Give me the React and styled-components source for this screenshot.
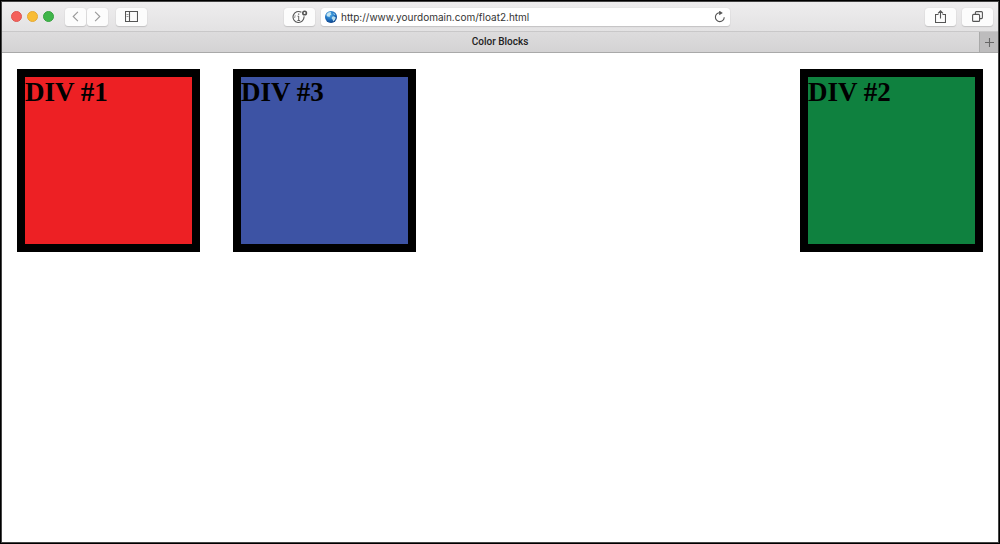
import React from 'react';
import styled, { createGlobalStyle } from 'styled-components';

const GlobalStyle = createGlobalStyle`
  * {
    box-sizing: border-box;
  }
  body {
    margin: 0;
    background: #fff;
  }
`;

const Window = styled.div`
  display: flex;
  flex-direction: column;
  min-height: 100vh;
  border: 1px solid #000;
  outline: 1px solid #444;
  outline-offset: -2px;
  padding: 1px;
  font-family: Roboto, 'Liberation Sans', sans-serif;
`;

const Toolbar = styled.header`
  display: grid;
  grid-template-columns: 273fr 446fr 263fr;
  align-items: center;
  height: 30px;
  padding: 0 5px 0 9px;
  background: linear-gradient(#eeedee, #e3e2e3);
  border-bottom: 1px solid #c9c8c9;
`;

const Group = styled.div`
  display: flex;
  align-items: center;
  gap: ${(props) => props.$gap || 0}px;
  justify-content: ${(props) => (props.$end ? 'flex-end' : 'flex-start')};
`;

const Lights = styled.div`
  display: flex;
  gap: 5px;
  margin-right: 11px;
`;

const Light = styled.button`
  width: 11px;
  height: 11px;
  padding: 0;
  border: 1px solid ${(props) => props.$edge};
  border-radius: 50%;
  background: ${(props) => props.$color};
`;

const ToolButton = styled.button`
  display: flex;
  align-items: center;
  justify-content: center;
  flex: none;
  width: ${(props) => (props.$narrow ? 21 : 31)}px;
  height: 18px;
  padding: 0;
  border: 0;
  border-radius: 3px;
  background: #fcfcfc;
  box-shadow: 0 0 1px #c4c3c4, 0 1px 1px #c4c3c4;
  color: ${(props) => (props.$dim ? '#999' : '#555')};
`;

const NavButtons = styled.div`
  display: flex;
  gap: 1px;
  margin-right: 8px;
`;

const AddressBar = styled.form`
  display: flex;
  align-items: center;
  flex: 1;
  min-width: 0;
  height: 18px;
  padding: 0 4px;
  gap: 4px;
  border-radius: 3px;
  background: #fff;
  box-shadow: 0 0 1px #c4c3c4, 0 1px 1px #c4c3c4;
`;

const AddressInput = styled.input`
  flex: 1;
  min-width: 0;
  padding: 0;
  border: 0;
  outline: 0;
  background: transparent;
  color: #333;
  font-family: Inter, 'Liberation Sans', sans-serif;
  font-size: 10px;
  line-height: 16px;
`;

const ReloadButton = styled.button`
  display: flex;
  padding: 0;
  border: 0;
  background: none;
  color: #555;
`;

const TabBar = styled.nav`
  display: flex;
  height: 21px;
  background: linear-gradient(#dddcdd, #d4d3d4);
  border-bottom: 1px solid #a9a9a9;
`;

const Tab = styled.button`
  flex: 1;
  padding: 0 0 0 19px;
  border: 0;
  background: none;
  color: #222;
  font-family: inherit;
  font-size: 10px;
  font-weight: 500;
  line-height: 20px;
`;

const NewTab = styled.button`
  display: flex;
  align-items: center;
  justify-content: center;
  width: 19px;
  padding: 0;
  border: 0;
  border-left: 1px solid #a9a9a9;
  background: #bdbcbd;
  color: #666;
`;

const Page = styled.main`
  display: flex;
  align-items: flex-start;
  gap: 33px;
  padding: 16px 15px;
`;

const Block = styled.section`
  flex: none;
  width: 183px;
  height: 183px;
  border: 8px solid #000;
  background: ${(props) => props.$color};
  margin-left: ${(props) => (props.$right ? 'auto' : 0)};
`;

const BlockTitle = styled.h1`
  margin: 0;
  color: #000;
  font-family: 'Liberation Serif', serif;
  font-size: 27px;
  font-weight: bold;
  line-height: 31px;
`;

const Icon = ({ width, height, children }) => (
  <svg
    width={width}
    height={height}
    viewBox={`0 0 ${width} ${height}`}
    fill="none"
    stroke="currentColor"
    strokeWidth="1.1"
    aria-hidden="true"
  >
    {children}
  </svg>
);

const Globe = () => (
  <svg width="12" height="12" viewBox="0 0 12 12" aria-hidden="true">
    <defs>
      <radialGradient id="sea" cx="0.4" cy="0.3" r="0.7">
        <stop offset="0" stopColor="#58b4ea" />
        <stop offset="0.6" stopColor="#1d6fc0" />
        <stop offset="1" stopColor="#0d4288" />
      </radialGradient>
    </defs>
    <circle cx="6" cy="6" r="6" fill="url(#sea)" />
    <path d="M1.5 3.2 3.4 1.4 6 1.1 5.6 2.5 6.4 3.4 4.9 4.6 4.6 6 3 5.4 1.8 5.2Z" fill="#c6e6f2" />
    <path d="M7 5.8 8.8 5.2 10.8 6.6 10 8.8 8.2 10.4 7.6 8.4 6.6 7.4Z" fill="#b5dcec" />
    <path d="M8 1.8 9.7 2.7 10.5 4.2 8.8 3.7Z" fill="#8fcbe8" />
  </svg>
);

const blocks = [
  { title: 'DIV #1', color: '#ed2024' },
  { title: 'DIV #3', color: '#3d53a4' },
  { title: 'DIV #2', color: '#0f813f', right: true },
];

export default function App() {
  return (
    <Window>
      <GlobalStyle />
      <Toolbar>
        <Group>
          <Lights>
            <Light $color="#f4605a" $edge="#df5650" aria-label="Close" />
            <Light $color="#f9bc33" $edge="#e5a935" aria-label="Minimize" />
            <Light $color="#3fb549" $edge="#36a23f" aria-label="Zoom" />
          </Lights>
          <NavButtons>
            <ToolButton $narrow $dim aria-label="Back">
              <Icon width={7} height={11}>
                <path d="M5.9 .8 1.2 5.5 5.9 10.2" />
              </Icon>
            </ToolButton>
            <ToolButton $narrow $dim aria-label="Forward">
              <Icon width={7} height={11}>
                <path d="M1.1 .8 5.8 5.5 1.1 10.2" />
              </Icon>
            </ToolButton>
          </NavButtons>
          <ToolButton aria-label="Show sidebar">
            <Icon width={13} height={11}>
              <path d="M.5 .5h12v10H.5ZM4.5 .5v10" />
              <path d="M1.5 3.5h2M1.5 5.5h2" strokeWidth="0.6" />
            </Icon>
          </ToolButton>
        </Group>
        <Group $gap={6}>
          <ToolButton aria-label="Content blockers">
            <Icon width={16} height={14}>
              <path d="M9.4 2.3A5.5 5.5 0 1 0 12 6.4" />
              <path d="M6.7 6v4.5M5.5 6.2h1.2M5.4 10.5h2.7" strokeWidth="0.9" />
              <path d="M6.7 3.6v1.2" />
              <path d="M3.2 5.2 2.6 8" strokeWidth="0.6" />
              <circle cx="12.6" cy="3" r="1.8" strokeWidth="1.6" />
            </Icon>
          </ToolButton>
          <AddressBar onSubmit={(e) => e.preventDefault()}>
            <Globe />
            <AddressInput
              aria-label="Address"
              defaultValue="http://www.yourdomain.com/float2.html"
            />
            <ReloadButton type="button" aria-label="Reload">
              <Icon width={12} height={12}>
                <path d="M6 1.8A4.4 4.4 0 1 0 10.2 6.2" />
                <path d="M5.2 -.4 8.8 1.9 5.2 4.2Z" fill="currentColor" stroke="none" />
              </Icon>
            </ReloadButton>
          </AddressBar>
        </Group>
        <Group $gap={6} $end>
          <ToolButton aria-label="Share">
            <Icon width={11} height={13}>
              <path d="M3.5 4.5h-3v8h10v-8h-3M5.5 8.5V1M3 3.3 5.5 .8 8 3.3" />
            </Icon>
          </ToolButton>
          <ToolButton aria-label="Show all tabs">
            <Icon width={11} height={11}>
              <rect x="0.6" y="3.4" width="7" height="7" rx="1" />
              <path d="M3.4 3.4v-1.8a1 1 0 0 1 1-1h5a1 1 0 0 1 1 1v5a1 1 0 0 1-1 1h-1.8" />
            </Icon>
          </ToolButton>
        </Group>
      </Toolbar>
      <TabBar>
        <Tab>Color Blocks</Tab>
        <NewTab aria-label="New tab">
          <Icon width={11} height={11}>
            <path d="M5.5 1v9M1 5.5h9" />
          </Icon>
        </NewTab>
      </TabBar>
      <Page>
        {blocks.map((block) => (
          <Block key={block.title} $color={block.color} $right={block.right}>
            <BlockTitle>{block.title}</BlockTitle>
          </Block>
        ))}
      </Page>
    </Window>
  );
}
